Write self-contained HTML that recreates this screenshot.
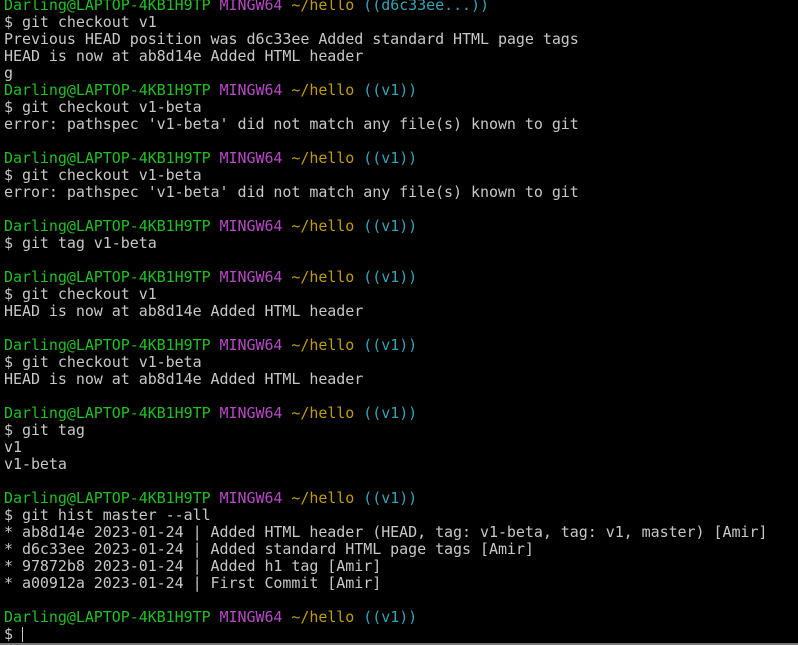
<!DOCTYPE html>
<html><head><meta charset="utf-8"><style>
html,body{margin:0;padding:0;background:#000;width:798px;height:645px;overflow:hidden}
pre{position:absolute;left:4px;top:-3px;margin:0;font-family:"DejaVu Sans Mono","Liberation Mono",monospace;font-size:15px;line-height:17px;color:#c7c7c7;letter-spacing:-0.05px}
.g{color:#1dc121}.m{color:#b847c6}.y{color:#c19c00}.c{color:#2fa4b8}
.bl{position:absolute;left:0;right:0;top:643px;height:2px;background:#777}
.cur{display:inline-block;width:1px;height:15px;background:#c7c7c7;vertical-align:-3px}
</style></head><body><pre><span class="g">Darling@LAPTOP-4KB1H9TP</span> <span class="m">MINGW64</span> <span class="y">~/hello</span> <span class="c">((d6c33ee...))</span>
$ git checkout v1
Previous HEAD position was d6c33ee Added standard HTML page tags
HEAD is now at ab8d14e Added HTML header
g
<span class="g">Darling@LAPTOP-4KB1H9TP</span> <span class="m">MINGW64</span> <span class="y">~/hello</span> <span class="c">((v1))</span>
$ git checkout v1-beta
error: pathspec 'v1-beta' did not match any file(s) known to git

<span class="g">Darling@LAPTOP-4KB1H9TP</span> <span class="m">MINGW64</span> <span class="y">~/hello</span> <span class="c">((v1))</span>
$ git checkout v1-beta
error: pathspec 'v1-beta' did not match any file(s) known to git

<span class="g">Darling@LAPTOP-4KB1H9TP</span> <span class="m">MINGW64</span> <span class="y">~/hello</span> <span class="c">((v1))</span>
$ git tag v1-beta

<span class="g">Darling@LAPTOP-4KB1H9TP</span> <span class="m">MINGW64</span> <span class="y">~/hello</span> <span class="c">((v1))</span>
$ git checkout v1
HEAD is now at ab8d14e Added HTML header

<span class="g">Darling@LAPTOP-4KB1H9TP</span> <span class="m">MINGW64</span> <span class="y">~/hello</span> <span class="c">((v1))</span>
$ git checkout v1-beta
HEAD is now at ab8d14e Added HTML header

<span class="g">Darling@LAPTOP-4KB1H9TP</span> <span class="m">MINGW64</span> <span class="y">~/hello</span> <span class="c">((v1))</span>
$ git tag
v1
v1-beta

<span class="g">Darling@LAPTOP-4KB1H9TP</span> <span class="m">MINGW64</span> <span class="y">~/hello</span> <span class="c">((v1))</span>
$ git hist master --all
* ab8d14e 2023-01-24 | Added HTML header (HEAD, tag: v1-beta, tag: v1, master) [Amir]
* d6c33ee 2023-01-24 | Added standard HTML page tags [Amir]
* 97872b8 2023-01-24 | Added h1 tag [Amir]
* a00912a 2023-01-24 | First Commit [Amir]

<span class="g">Darling@LAPTOP-4KB1H9TP</span> <span class="m">MINGW64</span> <span class="y">~/hello</span> <span class="c">((v1))</span>
$ <span class="cur"></span></pre><div class="bl"></div></body></html>
